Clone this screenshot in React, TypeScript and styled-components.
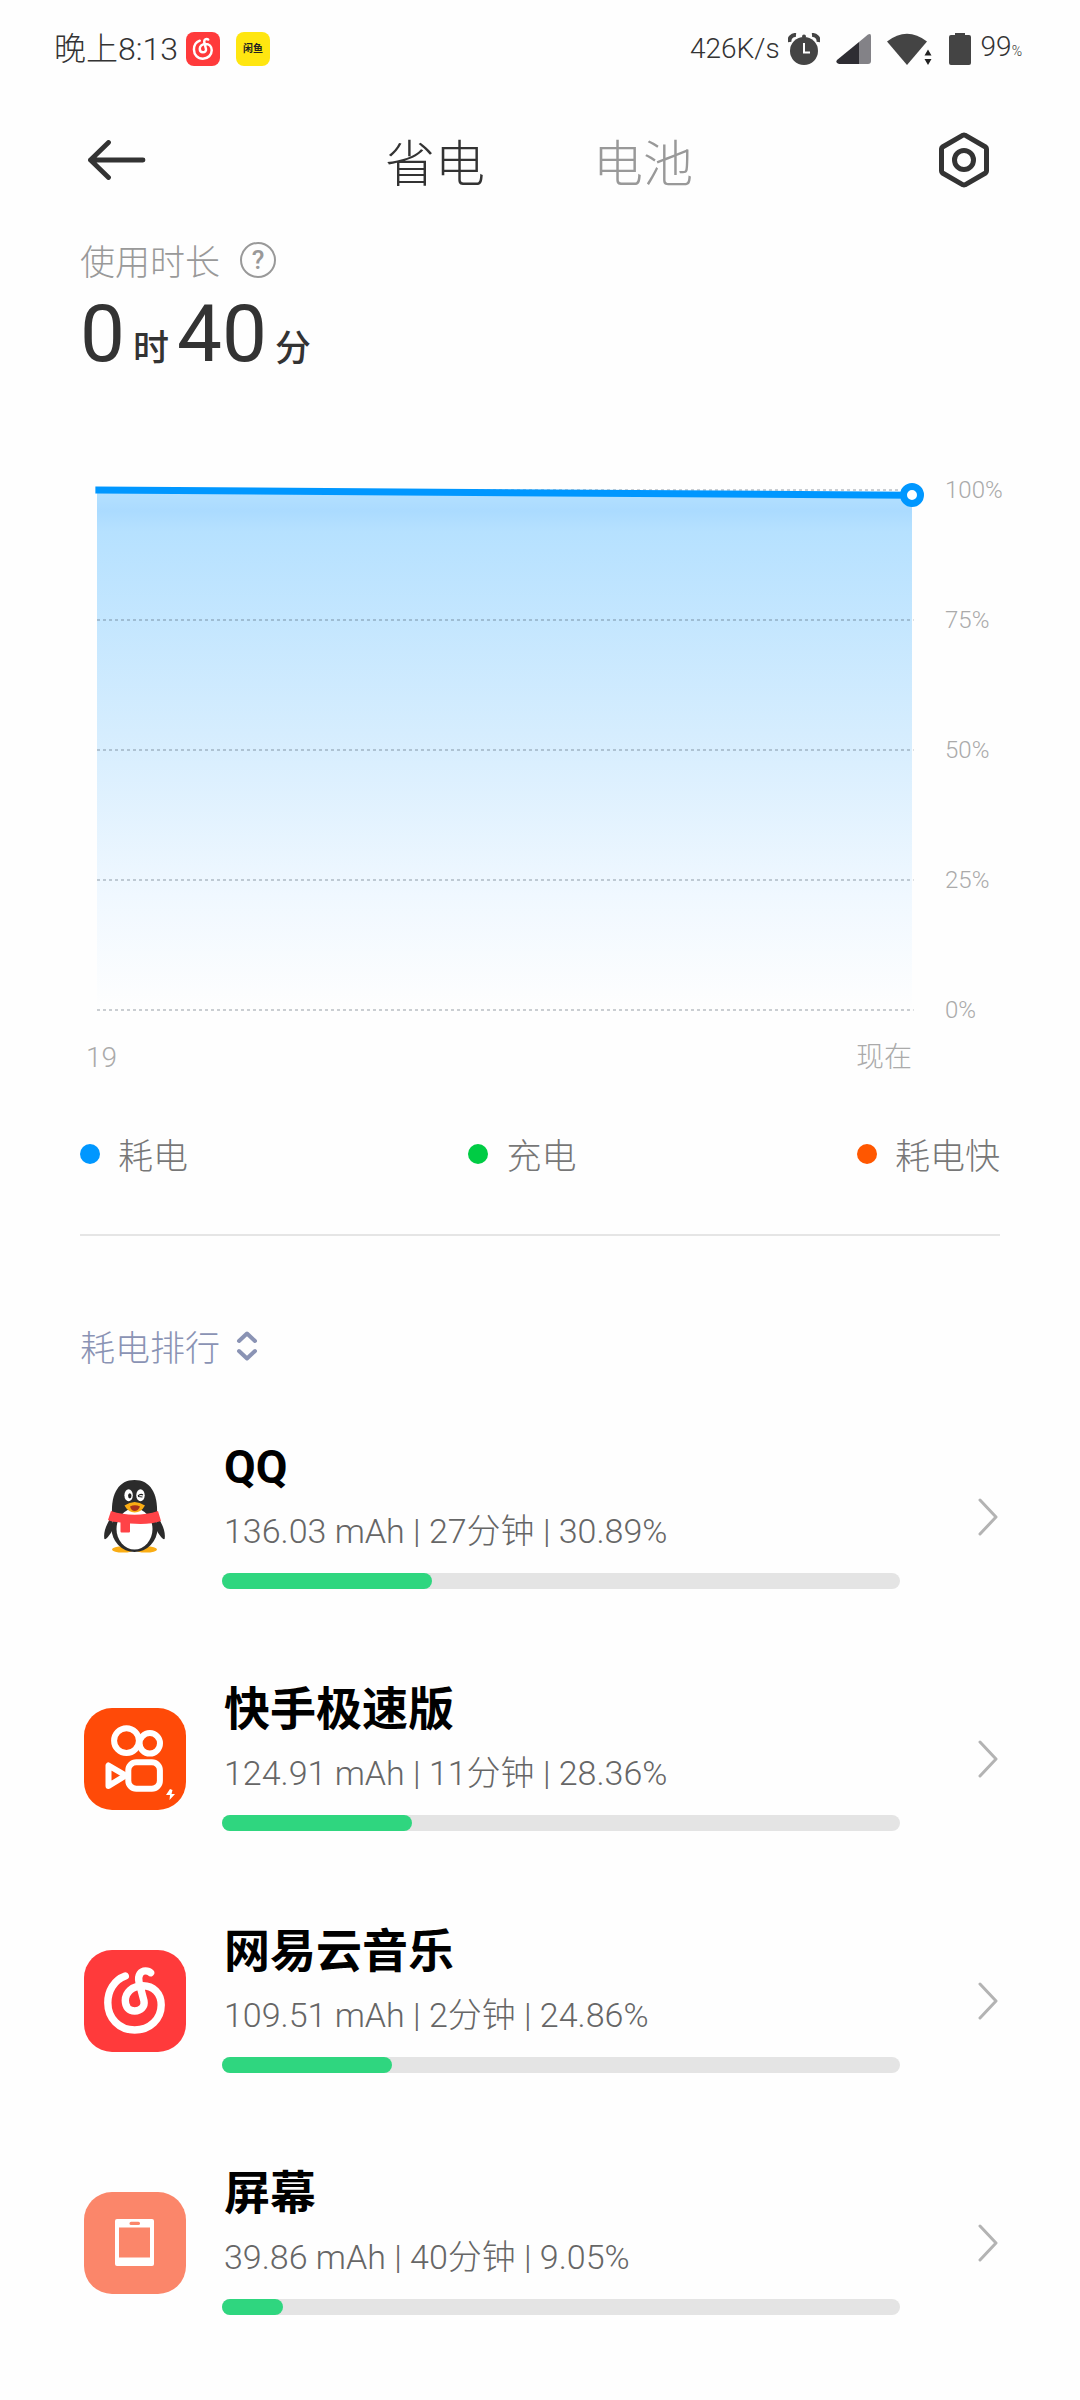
import React, { useState } from "react";
import styled, { createGlobalStyle } from "styled-components";

const sans = `Roboto, "Noto Sans CJK SC", sans-serif`;
const han = `"Noto Sans CJK SC", Roboto, sans-serif`;

const GlobalStyle = createGlobalStyle`
  *, *::before, *::after { box-sizing: border-box; }
  body { margin: 0; background: #fefefe; font-family: ${sans}; }
  button { border: 0; padding: 0; background: none; font: inherit; color: inherit; cursor: pointer; }
  svg { display: block; flex: none; }
`;

const Page = styled.div`
  min-height: 100vh;
  background: #fefefe;
  color: #333;
`;

const StatusBar = styled.div`
  display: flex;
  justify-content: space-between;
  align-items: center;
  height: 98px;
  padding: 0 58px 0 54px;
  line-height: 36px;
  font-weight: 300;
  color: #333;
`;

const StatusLeft = styled.div`
  display: flex;
  align-items: center;
  font-size: 32px;
`;

const StatusApps = styled.div`
  display: flex;
  gap: 16px;
  margin-left: 8px;
`;

const XianyuBadge = styled.span`
  display: flex;
  align-items: center;
  justify-content: center;
  width: 34px;
  height: 34px;
  border-radius: 8px;
  background: #ffe610;
  color: #222;
  font-size: 10px;
  font-weight: 700;
`;

const StatusRight = styled.div`
  display: flex;
  align-items: center;
  font-size: 28px;
`;

const StatusIcons = styled.div`
  display: flex;
  align-items: center;
  gap: 16px;
  margin: 0 10px 0 8px;
`;

const Charge = styled.span`
  small { font-size: 14px; }
`;

const Header = styled.header`
  display: grid;
  grid-template-columns: 1fr auto 1fr;
  align-items: center;
  height: 124px;
  padding: 0 90px 0 88px;
`;

const IconButton = styled.button<{ $end?: boolean }>`
  justify-self: ${(p) => (p.$end ? "end" : "start")};
`;

const Tabs = styled.div`
  display: flex;
  gap: 108px;
`;

const Tab = styled.button<{ $active: boolean }>`
  font-family: ${han};
  font-size: 50px;
  line-height: 72px;
  font-weight: 300;
  color: ${(p) => (p.$active ? "#333" : "#999")};
`;

const Content = styled.main`
  padding: 12px 80px 0;
`;

const UsageLabel = styled.div`
  display: flex;
  align-items: center;
  gap: 20px;
  font-family: ${han};
  font-size: 35px;
  line-height: 52px;
  font-weight: 300;
  color: #999;
`;

const HelpButton = styled.button`
  display: flex;
  align-items: center;
  justify-content: center;
  width: 36px;
  height: 36px;
  border: 2px solid #999;
  border-radius: 50%;
  font-family: ${sans};
  font-size: 26px;
  line-height: 32px;
  font-weight: 500;
`;

const Duration = styled.div`
  display: flex;
  align-items: baseline;
  gap: 8px;
  height: 96px;
  font-size: 80px;
  line-height: 96px;
`;

const Unit = styled.span`
  font-size: 36px;
  line-height: 36px;
  font-weight: 500;
`;

const Chart = styled.section`
  margin-top: 108px;
`;

const ChartBody = styled.div`
  display: flex;
  gap: 33px;
  height: 520px;
  padding-left: 17px;
`;

const Plot = styled.div`
  position: relative;
  flex: 1;
  min-width: 0;
`;

const PlotSvg = styled.svg`
  width: 100%;
  height: 100%;
  overflow: visible;
`;

const Marker = styled.span`
  position: absolute;
  right: -12px;
  top: -7px;
  width: 24px;
  height: 24px;
  border: 7px solid #0097ff;
  border-radius: 50%;
  background: #fff;
`;

const Scale = styled.div`
  display: flex;
  flex-direction: column;
  justify-content: space-between;
  width: 55px;
  margin: -16px 0;
  font-size: 24px;
  line-height: 32px;
  font-weight: 300;
  color: #aaa;
`;

const TimeAxis = styled.div`
  display: flex;
  justify-content: space-between;
  margin-top: 28px;
  padding: 0 88px 0 6px;
  font-size: 28px;
  line-height: 40px;
  font-weight: 300;
  color: #aaa;
`;

const Legend = styled.div`
  display: flex;
  justify-content: space-between;
  margin-top: 50px;
  padding-bottom: 54px;
  border-bottom: 2px solid #e5e5e5;
`;

const LegendItem = styled.span<{ $color: string }>`
  display: flex;
  align-items: center;
  gap: 18px;
  font-family: ${han};
  font-size: 35px;
  line-height: 52px;
  font-weight: 300;
  color: #777;
  &::before {
    content: "";
    width: 20px;
    height: 20px;
    border-radius: 50%;
    background: ${(p) => p.$color};
  }
`;

const SortButton = styled.button`
  display: flex;
  align-items: center;
  gap: 16px;
  margin-top: 84px;
  font-family: ${han};
  font-size: 35px;
  line-height: 52px;
  font-weight: 300;
  color: #8a93b4;
`;

const List = styled.ul`
  margin: 24px 0 0;
  padding: 0;
  list-style: none;
`;

const Row = styled.a`
  display: flex;
  align-items: center;
  height: 242px;
  padding: 0 2px 0 4px;
  color: inherit;
  text-decoration: none;
`;

const RowBody = styled.div`
  flex: 1;
  min-width: 0;
  margin: 0 78px 0 36px;
  padding-bottom: 10px;
`;

const Name = styled.div`
  padding-left: 2px;
  font-size: 46px;
  line-height: 64px;
  font-weight: 700;
  color: #000;
`;

const Meta = styled.div`
  margin: 6px 0 16px;
  padding-left: 2px;
  font-size: 34px;
  line-height: 52px;
  font-weight: 300;
  color: #666;
`;

const Track = styled.div`
  height: 16px;
  border-radius: 8px;
  background: #e4e4e4;
`;

const Fill = styled.div`
  height: 100%;
  border-radius: 8px;
  background: #2fd67f;
`;

const NetEaseIcon = ({ size, round }: { size: number; round: number }) => (
  <svg width={size} height={size} viewBox="0 0 102 102">
    <rect width="102" height="102" rx={round} fill="#ff3a3b" />
    <path
      d="M41.3 26C30 30 23.8 41 23.8 52.7C23.8 68 35 80 50.7 80C66 80 77.2 69 77.2 55C77.2 43 69 35.7 58.9 35.7C48 35.7 41.3 43 41.3 50.5C41.3 57 45 61 50.7 61C57 61 61 56.5 60 51L55 32C53.5 25 57 20.9 61.5 20.9C64 20.9 65.5 21.5 66.6 22.7"
      fill="none"
      stroke="#fff"
      strokeWidth="7.4"
      strokeLinecap="round"
      strokeLinejoin="round"
    />
  </svg>
);

const QQIcon = () => (
  <svg width="102" height="102" viewBox="0 0 102 102">
    <ellipse cx="39" cy="83.4" rx="11" ry="3.2" fill="#faad14" />
    <ellipse cx="62" cy="83.4" rx="11" ry="3.2" fill="#faad14" />
    <path d="M28 50C23 57 19 66 20.4 73C22 74 25 70 28 65ZM73 50C78 57 82 66 80.6 73C79 74 76 70 73 65Z" fill="#2b2b2b" />
    <ellipse cx="50.5" cy="62" rx="23" ry="24" fill="#2b2b2b" />
    <path d="M28 48C27 27 35 14 50.5 14S74 27 73 48Z" fill="#2b2b2b" />
    <ellipse cx="50.5" cy="63" rx="18" ry="20.5" fill="#fff" />
    <path d="M27 45C42 50 59 50 74 45L77 55C69 58 58 58.5 46 57.5V65.5Q46 66.5 45 66.5H37.5Q36.5 66.5 36.5 65.5V56.5C31 56 27 55.5 24 54Z" fill="#ff4347" />
    <ellipse cx="44.6" cy="29.3" rx="4.2" ry="6" fill="#fff" />
    <ellipse cx="56.5" cy="29.3" rx="4.2" ry="6" fill="#fff" />
    <ellipse cx="45.8" cy="29.8" rx="1.7" ry="2.6" fill="#222" />
    <path d="M54 30Q56.5 27.5 59 29M54 30.5L58.5 31" fill="none" stroke="#222" strokeWidth="1.2" />
    <path d="M40.5 39.5Q50.5 32.5 61 39.5Q57 46.5 50.7 46.5T40.5 39.5Z" fill="#faad14" />
    <path d="M46 40.5Q51 38 56 40.5Q54 45 50.7 45T46 40.5Z" fill="#a8321c" />
  </svg>
);

const KuaishouIcon = () => (
  <svg width="102" height="102" viewBox="0 0 102 102">
    <rect width="102" height="102" rx="28" fill="#ff4a08" />
    <g fill="none" stroke="#fff" strokeWidth="6" strokeLinejoin="round">
      <circle cx="42.5" cy="32.7" r="12.4" />
      <circle cx="65.8" cy="35.3" r="10.2" />
      <rect x="44.3" y="54.3" width="31.6" height="26.4" rx="8" />
      <path d="M24.5 57.5V78L40 68.5V66.5Z" />
    </g>
    <path d="M86 81L82 87H86L85.5 92L91 86H87.5L88.5 82Z" fill="#fff" />
  </svg>
);

const ScreenIcon = () => (
  <svg width="102" height="102" viewBox="0 0 102 102">
    <rect width="102" height="102" rx="28" fill="#fb866a" />
    <rect x="31" y="27" width="39" height="47" rx="2" fill="#fff" />
    <rect x="35" y="35.5" width="31" height="30" fill="#fb866a" />
    <rect x="45.5" y="29.7" width="10.5" height="3.4" rx="1.6" fill="#fb866a" />
  </svg>
);

const apps = [
  { id: "qq", name: "QQ", meta: "136.03 mAh | 27分钟 | 30.89%", share: 30.89, icon: <QQIcon /> },
  { id: "kuaishou", name: "快手极速版", meta: "124.91 mAh | 11分钟 | 28.36%", share: 28.36, icon: <KuaishouIcon /> },
  { id: "netease", name: "网易云音乐", meta: "109.51 mAh | 2分钟 | 24.86%", share: 24.86, icon: <NetEaseIcon size={102} round={28} /> },
  { id: "screen", name: "屏幕", meta: "39.86 mAh | 40分钟 | 9.05%", share: 9.05, icon: <ScreenIcon /> },
];

const legend = [
  { label: "耗电", color: "#0097ff" },
  { label: "充电", color: "#00cc44" },
  { label: "耗电快", color: "#ff5700" },
];

const ticks = [100, 75, 50, 25, 0];

const BatteryChart = () => (
  <Chart>
    <ChartBody>
      <Plot>
        <PlotSvg viewBox="0 0 100 100" preserveAspectRatio="none">
          <defs>
            <linearGradient id="level" x1="0" y1="0" x2="0" y2="1">
              <stop offset="0" stopColor="#b5e1ff" />
              <stop offset="0.04" stopColor="#abdbff" />
              <stop offset="0.08" stopColor="#b6e1ff" />
              <stop offset="0.5" stopColor="#d8eefe" />
              <stop offset="0.78" stopColor="#f0f8ff" />
              <stop offset="1" stopColor="#fefefe" />
            </linearGradient>
          </defs>
          <path d="M0 0L100 1V100H0Z" fill="url(#level)" />
          {ticks.map((t) => (
            <line key={t} x1="0" x2="100.2" y1={100 - t} y2={100 - t} stroke="#304050" strokeOpacity="0.5" strokeWidth="1" strokeDasharray="3 3" vectorEffect="non-scaling-stroke" />
          ))}
          <line x1="-0.2" x2="100" y1="0" y2="1" stroke="#0097ff" strokeWidth="7" vectorEffect="non-scaling-stroke" />
        </PlotSvg>
        <Marker />
      </Plot>
      <Scale>
        {ticks.map((t) => (
          <span key={t}>{t}%</span>
        ))}
      </Scale>
    </ChartBody>
    <TimeAxis>
      <span>19</span>
      <span>现在</span>
    </TimeAxis>
  </Chart>
);

export default function App() {
  const [tab, setTab] = useState("省电");
  return (
    <Page lang="zh-CN">
      <GlobalStyle />
      <StatusBar>
        <StatusLeft>
          <span>晚上8:13</span>
          <StatusApps>
            <NetEaseIcon size={34} round={24} />
            <XianyuBadge>闲鱼</XianyuBadge>
          </StatusApps>
        </StatusLeft>
        <StatusRight>
          <span>426K/s</span>
          <StatusIcons>
            <svg width="32" height="32" viewBox="0 0 32 32">
              <circle cx="16" cy="18" r="14" fill="#444" />
              <circle cx="16" cy="3.5" r="2" fill="#444" />
              <path d="M1.5 9A6 6 0 0 1 8 2M30.5 9A6 6 0 0 0 24 2" fill="none" stroke="#444" strokeWidth="4" />
              <path d="M16 10V19.5H22" fill="none" stroke="#fff" strokeWidth="2" />
            </svg>
            <svg width="35" height="32" viewBox="0 0 35 32">
              <path d="M23 9V31H3Q-1 30 1 27Z" fill="#2e2d33" />
              <path d="M23 9L32 1.5Q35 0 35 3V28Q35 31 32 31H23Z" fill="#838287" />
            </svg>
            <svg width="46" height="32" viewBox="0 0 46 32">
              <path d="M0 8.5Q20 -7 40 8.5L20 32Z" fill="#444" />
              <path d="M37.5 22.5L41 16.5L44.5 22.5ZM37.5 26L41 32L44.5 26Z" fill="#222" />
            </svg>
            <svg width="22" height="32" viewBox="0 0 22 32">
              <path d="M6 0H16V2H20Q22 2 22 4V30Q22 32 20 32H2Q0 32 0 30V4Q0 2 2 2H6Z" fill="#444" />
            </svg>
          </StatusIcons>
          <Charge>
            99<small>%</small>
          </Charge>
        </StatusRight>
      </StatusBar>

      <Header>
        <IconButton aria-label="返回">
          <svg width="58" height="40" viewBox="0 0 58 40" fill="none" stroke="#333" strokeWidth="4.8" strokeLinecap="round" strokeLinejoin="round">
            <path d="M20.5 2.5L2.5 20L20.5 37.5M2.5 20H55" />
          </svg>
        </IconButton>
        <Tabs role="tablist">
          {["省电", "电池"].map((t) => (
            <Tab key={t} role="tab" aria-selected={tab === t} $active={tab === t} onClick={() => setTab(t)}>
              {t}
            </Tab>
          ))}
        </Tabs>
        <IconButton $end aria-label="设置">
          <svg width="52" height="56" viewBox="0 0 52 56" fill="none" stroke="#333" strokeWidth="5" strokeLinejoin="round">
            <path d="M25 3.2Q26 2.8 27 3.2L47.5 15Q48.5 15.8 48.5 17V39Q48.5 40.2 47.5 41L27 52.8Q26 53.2 25 52.8L4.5 41Q3.5 40.2 3.5 39V17Q3.5 15.8 4.5 15Z" />
            <circle cx="26" cy="28" r="9.5" />
          </svg>
        </IconButton>
      </Header>

      <Content>
        <UsageLabel>
          使用时长
          <HelpButton aria-label="使用时长说明">?</HelpButton>
        </UsageLabel>
        <Duration>
          <span>0</span>
          <Unit>时</Unit>
          <span>40</span>
          <Unit>分</Unit>
        </Duration>

        <BatteryChart />

        <Legend>
          {legend.map((l) => (
            <LegendItem key={l.label} $color={l.color}>
              {l.label}
            </LegendItem>
          ))}
        </Legend>

        <SortButton>
          耗电排行
          <svg width="22" height="30" viewBox="0 0 22 30" fill="none" stroke="#8a93b4" strokeWidth="4" strokeLinecap="round" strokeLinejoin="round">
            <path d="M3 10L11 2.5L19 10M3 20L11 27.5L19 20" />
          </svg>
        </SortButton>

        <List>
          {apps.map((app) => (
            <li key={app.id}>
              <Row href={`#${app.id}`}>
                {app.icon}
                <RowBody>
                  <Name>{app.name}</Name>
                  <Meta>{app.meta}</Meta>
                  <Track role="progressbar" aria-label={app.name} aria-valuenow={app.share}>
                    <Fill style={{ width: `${Math.round(app.share)}%` }} />
                  </Track>
                </RowBody>
                <svg width="20" height="38" viewBox="0 0 20 38" fill="none" stroke="#b3b3b3" strokeWidth="3" strokeLinecap="round" strokeLinejoin="round">
                  <path d="M2 2L18 19L2 36" />
                </svg>
              </Row>
            </li>
          ))}
        </List>
      </Content>
    </Page>
  );
}
